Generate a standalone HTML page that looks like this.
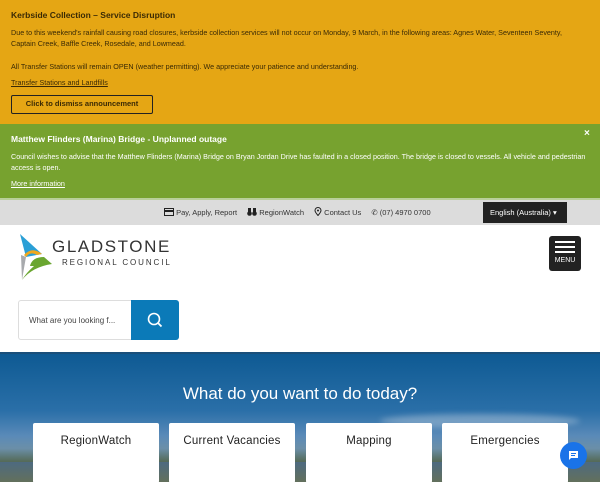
<!DOCTYPE html>
<html><head><meta charset="utf-8"><style>
*{margin:0;padding:0;box-sizing:border-box}
body{width:600px;height:480px;overflow:hidden;font-family:"Liberation Sans",sans-serif;position:relative;background:#fff}
.a{position:absolute}
.yel{left:0;top:0;width:600px;height:124px;background:#e5a614;color:#3a2a05}
.grn{left:0;top:124px;width:600px;height:74px;background:#77a22f;color:#fff}
.gray{left:0;top:198px;width:600px;height:27px;background:#dcdcdc;border-top:2px solid #b9cf9a}
.small{font-size:7.2px;line-height:11px}
.hero{left:0;top:352px;width:600px;height:128px;background:linear-gradient(180deg,#0e5a93 0%,#2a6fa8 45%,#5a8ab8 65%,#6b8fa8 75%,#556b5a 85%,#5d6b55 100%);border-top:2px solid #1a4f7a}
.card{top:423px;width:126px;height:60px;background:#fff;border-radius:2px;font-size:11.5px;text-align:center;padding-top:12px;color:#222;letter-spacing:.2px}
</style></head><body>
<div class="a yel">
 <div class="a" style="left:11px;top:10px;font-size:8.5px;font-weight:bold">Kerbside Collection – Service Disruption</div>
 <div class="a small" style="left:11px;top:27px;width:575px">Due to this weekend's rainfall causing road closures, kerbside collection services will not occur on Monday, 9 March, in the following areas: Agnes Water, Seventeen Seventy, Captain Creek, Baffle Creek, Rosedale, and Lowmead.</div>
 <div class="a small" style="left:11px;top:61px">All Transfer Stations will remain OPEN (weather permitting). We appreciate your patience and understanding.</div>
 <div class="a small" style="left:11px;top:77px;text-decoration:underline">Transfer Stations and Landfills</div>
 <div class="a" style="left:11px;top:95px;width:142px;height:19px;border:1.5px solid #222;border-radius:2px;font-size:7.5px;font-weight:bold;text-align:center;line-height:16px">Click to dismiss announcement</div>
</div>
<div class="a grn">
 <div class="a" style="left:11px;top:10px;font-size:8.5px;font-weight:bold">Matthew Flinders (Marina) Bridge - Unplanned outage</div>
 <div class="a" style="left:584px;top:4px;font-size:10px;font-weight:bold">×</div>
 <div class="a small" style="left:11px;top:27px;width:575px">Council wishes to advise that the Matthew Flinders (Marina) Bridge on Bryan Jordan Drive has faulted in a closed position. The bridge is closed to vessels. All vehicle and pedestrian access is open.</div>
 <div class="a small" style="left:11px;top:54px;text-decoration:underline">More information</div>
</div>
<div class="a gray">
 <div class="a" style="left:164px;top:7px;font-size:7.5px;color:#333;white-space:nowrap">
  <svg width="10" height="8" style="vertical-align:-1px"><rect x=".5" y=".5" width="9" height="7" fill="none" stroke="#222"/><rect x="0" y="2" width="10" height="2" fill="#222"/></svg> Pay, Apply, Report
  <span style="margin-left:8px"><svg width="10" height="8" style="vertical-align:-1px"><circle cx="2.5" cy="5.5" r="2.3" fill="#222"/><circle cx="7.5" cy="5.5" r="2.3" fill="#222"/><rect x="1" y="0" width="3" height="4" fill="#222"/><rect x="6" y="0" width="3" height="4" fill="#222"/></svg> RegionWatch</span>
  <span style="margin-left:8px"><svg width="8" height="9" style="vertical-align:-1px"><path d="M4 8.5C1 5 1 4 1 3.5a3 3 0 0 1 6 0C7 4 7 5 4 8.5z" fill="none" stroke="#222"/><circle cx="4" cy="3.5" r="1" fill="#222"/></svg> Contact Us</span>
  <span style="margin-left:8px">✆ (07) 4970 0700</span>
 </div>
 <div class="a" style="left:483px;top:2px;width:84px;height:21px;background:#222;color:#fff;font-size:7.5px;line-height:21px;padding-left:7px">English (Australia) ▾</div>
</div>
<svg class="a" style="left:18px;top:234px" width="36" height="48" viewBox="0 0 36 48">
 <path d="M2 0 L24 20 L8 23 Z" fill="#2a9fd6"/>
 <path d="M6 21 Q14 12 24 20 L19 21 Q12 17 8 23Z" fill="#f0a81e"/>
 <path d="M3 21 L8 23 Q6 34 4 46 Z" fill="#a8aaad"/>
 <path d="M4 46 Q14 33 34 30 L26 23 Q14 23 12 32 L16 32 Q8 39 4 46Z" fill="#6aa630"/>
</svg>
<div class="a" style="left:52px;top:237px;font-size:17px;letter-spacing:1.6px;color:#333">GLADSTONE</div>
<div class="a" style="left:62px;top:258px;font-size:8px;letter-spacing:1.9px;color:#333">REGIONAL COUNCIL</div>
<div class="a" style="left:549px;top:236px;width:32px;height:35px;background:#222;border-radius:3px;color:#fff;font-size:7px;text-align:center">
 <div style="margin:5px auto 0;width:20px;height:2px;background:#fff;box-shadow:0 5px #fff,0 10px #fff"></div>
 <div style="margin-top:14px">MENU</div>
</div>
<div class="a" style="left:18px;top:300px;width:160px;height:40px;border:1px solid #ddd;border-radius:3px;background:#fff">
 <div class="a" style="left:10px;top:15px;font-size:8px;color:#444">What are you looking f...</div>
 <div class="a" style="left:112px;top:-1px;width:48px;height:40px;background:#0b7ab8;border-radius:0 3px 3px 0">
  <svg class="a" style="left:16px;top:12px" width="16" height="16"><circle cx="7" cy="7" r="5.5" fill="none" stroke="#fff" stroke-width="1.6"/><path d="M11 11l3.5 3.5" stroke="#fff" stroke-width="1.8"/></svg>
 </div>
</div>
<div class="a hero">
 <div class="a" style="left:380px;top:60px;width:200px;height:14px;background:rgba(220,225,235,.35);border-radius:50%;filter:blur(3px)"></div>
 <div class="a" style="left:0;top:108px;width:600px;height:20px;background:linear-gradient(180deg,#4d6a80,#63705c)"></div>
</div>
<div class="a" style="left:0;top:384px;width:600px;text-align:center;color:#fff;font-size:17px">What do you want to do today?</div>
<div class="a card" style="left:33px">RegionWatch</div>
<div class="a card" style="left:169px">Current Vacancies</div>
<div class="a card" style="left:306px">Mapping</div>
<div class="a card" style="left:442px">Emergencies</div>
<div class="a" style="left:560px;top:442px;width:27px;height:27px;border-radius:50%;background:#1a73e8">
 <svg class="a" style="left:8px;top:8px" width="11" height="11"><path d="M1 1h9v7H3l-2 2z" fill="#fff"/><path d="M3 3.5h5M3 5.5h4" stroke="#1a73e8"/></svg>
</div>
</body></html>
